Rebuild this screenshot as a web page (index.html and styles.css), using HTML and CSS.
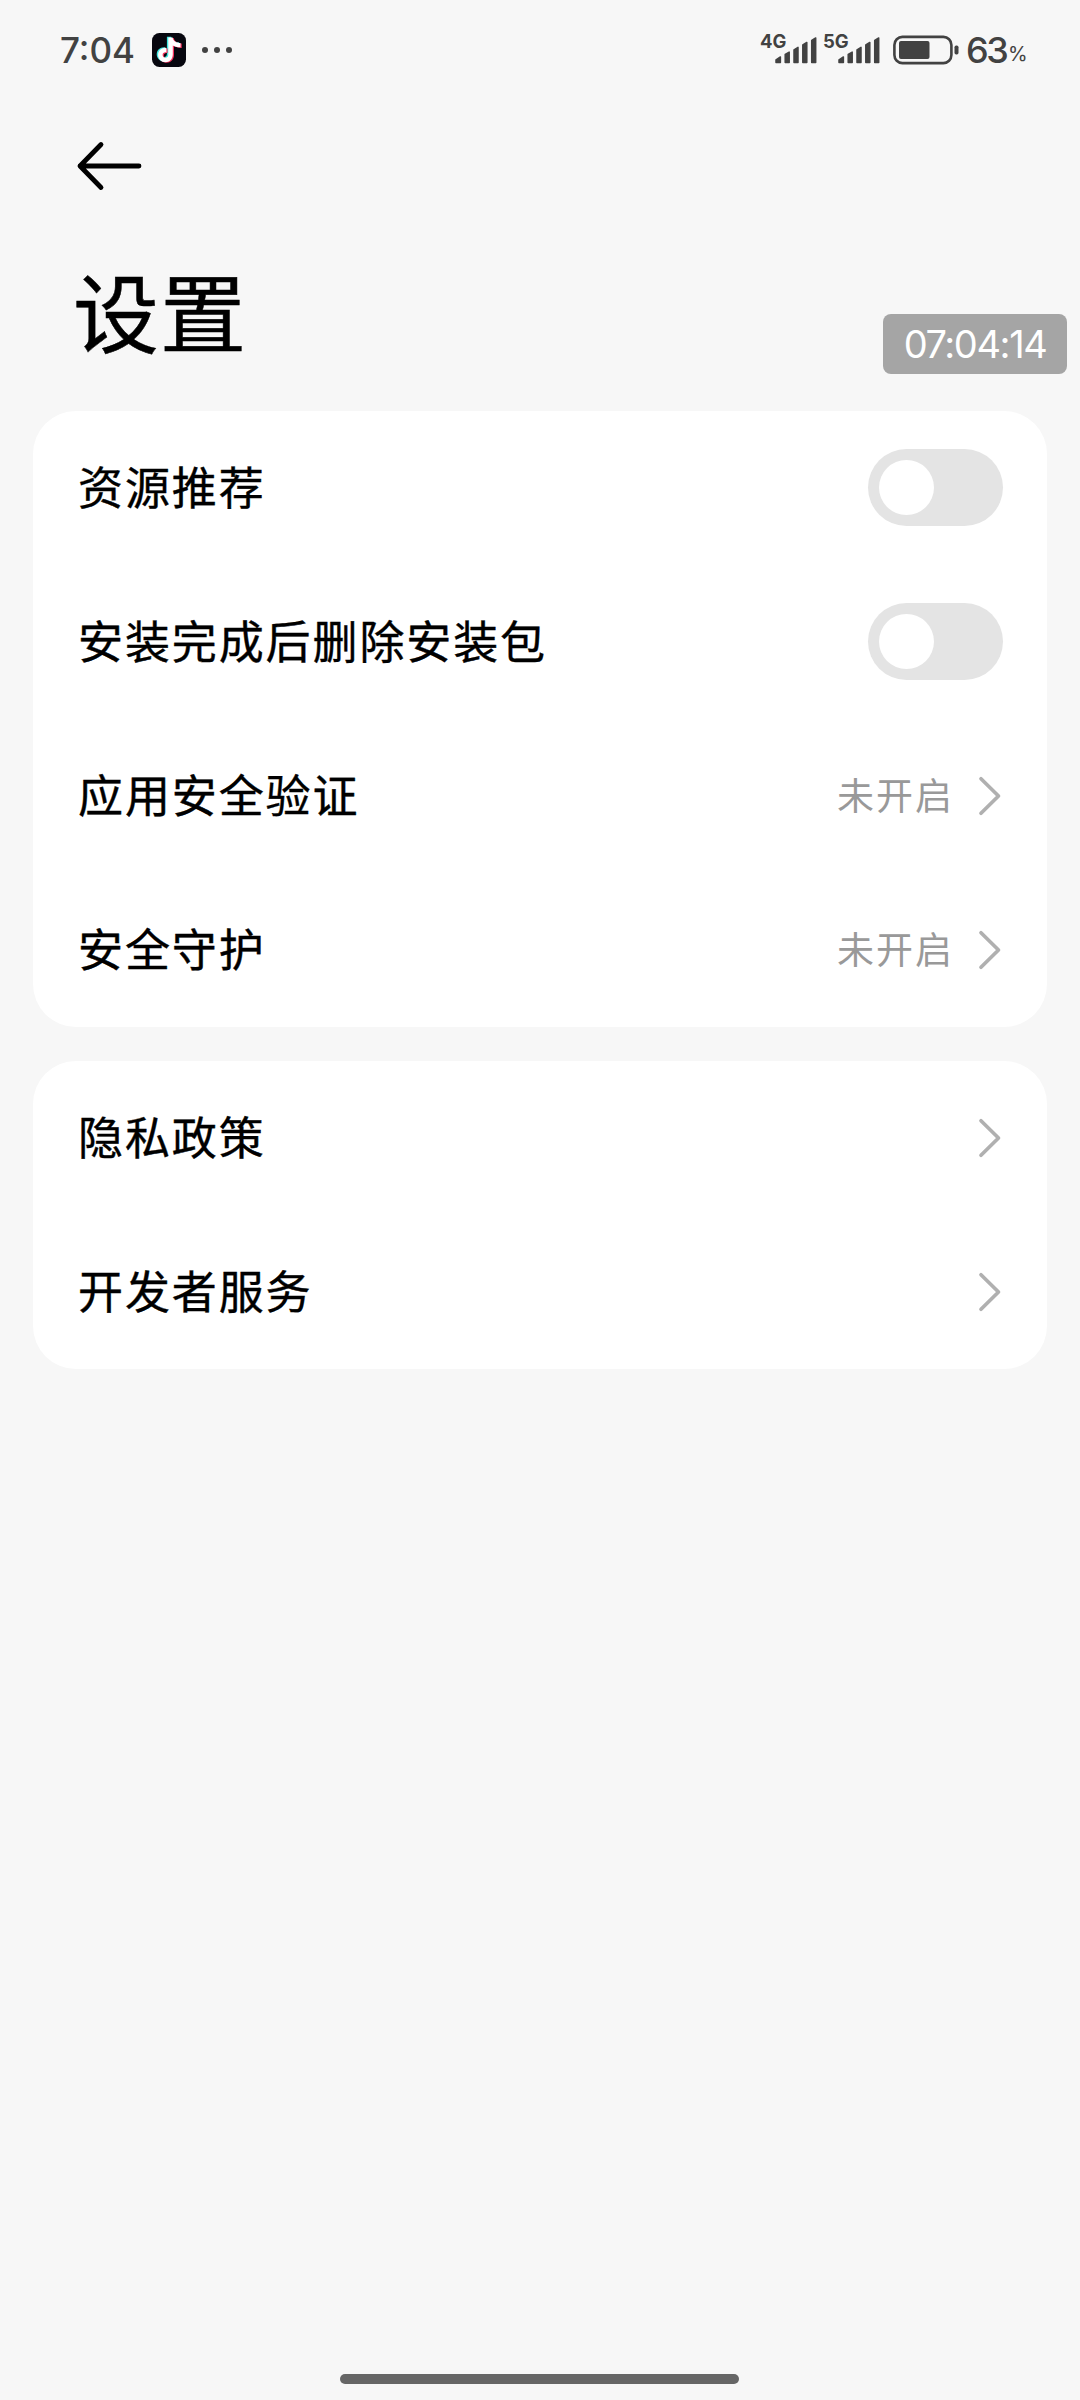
FILE: index.html
```html
<!DOCTYPE html>
<html lang="zh-CN">
<head>
<meta charset="utf-8">
<title>设置</title>
<link rel="stylesheet" href="styles.css">
</head>
<body>
<svg class="defs" aria-hidden="true">
  <defs>
    <symbol id="signal" viewBox="0 0 42 28">
      <path d="M1 25.500v-2.700l4.400-2.800v5.500zM10.200 25.500v-8l4-2.400v10.400zM19 25.500v-12.700l4-2.500v15.200zM27.800 25.500V8l4-2.500v20zM36.700 25.500V3.400l4-2.400v24.500z"/>
    </symbol>
    <symbol id="chevron" viewBox="0 0 24 40">
      <path d="M3 2.800 20.500 20 3 37.200"/>
    </symbol>
    <path id="note" d="M15.400 4.200h4.300c.5 3.400 3.500 5.400 7.900 5.600v4.300c-3 .1-5.800-.6-7.700-1.800v9c0 4.500-3.300 7.700-7.400 7.700-4.200 0-7.300-3.200-7.300-7.200 0-4.400 3.700-7.600 8.300-7.100v4.600c-2.100-.6-3.800.6-3.800 2.500 0 1.600 1.200 2.700 2.700 2.700 1.800 0 3-1.200 3-3.300z"/>
  </defs>
</svg>

<header class="status">
  <div class="status-left">
    <span class="clock">7:04</span>
    <svg class="tiktok" viewBox="0 0 34 34">
      <rect width="34" height="34" rx="7.500" fill="#07070f"/>
      <use href="#note" x="-.5" y="-.5" fill="#3fe6e0"/>
      <use href="#note" x="2.100" y=".8" fill="#f5305c"/>
      <use href="#note" x=".9" y=".2" fill="#fff"/>
    </svg>
    <svg class="dots" viewBox="0 0 30 6"><circle cx="3" cy="3" r="3"/><circle cx="15" cy="3" r="3"/><circle cx="27" cy="3" r="3"/></svg>
  </div>
  <div class="status-right">
    <div class="network"><span class="net-label">4G</span><svg class="bars"><use href="#signal"/></svg></div>
    <div class="network"><span class="net-label">5G</span><svg class="bars"><use href="#signal"/></svg></div>
    <svg class="battery" viewBox="0 0 66 30">
      <rect x="1.400" y="1.900" width="57" height="26.200" rx="8" fill="none" stroke="#424242" stroke-width="2.600"/>
      <rect x="6" y="6" width="30.500" height="18" rx="2"/>
      <rect x="61.500" y="10.500" width="4" height="9" rx="1.700"/>
    </svg>
    <span class="level">63</span><span class="percent">%</span>
  </div>
</header>

<nav class="toolbar">
  <svg class="back" viewBox="0 0 66 50"><path d="M25 3.500 4 25l21 21.500M4 25h59"/></svg>
</nav>
<h1 class="title">设置</h1>

<main class="content">
  <section class="card">
    <div class="row"><span class="label">资源推荐</span><span class="switch"></span></div>
    <div class="row"><span class="label">安装完成后删除安装包</span><span class="switch"></span></div>
    <div class="row"><span class="label">应用安全验证</span><span class="value">未开启</span><svg class="chevron"><use href="#chevron"/></svg></div>
    <div class="row"><span class="label">安全守护</span><span class="value">未开启</span><svg class="chevron"><use href="#chevron"/></svg></div>
  </section>
  <section class="card">
    <div class="row"><span class="label">隐私政策</span><svg class="chevron"><use href="#chevron"/></svg></div>
    <div class="row"><span class="label">开发者服务</span><svg class="chevron"><use href="#chevron"/></svg></div>
  </section>
</main>

<div class="time-overlay">07:04:14</div>
<div class="home-bar"></div>
</body>
</html>
```
FILE: styles.css
```css
* { box-sizing: border-box; }

body {
  position: relative;
  display: flex;
  flex-direction: column;
  margin: 0;
  width: 1080px;
  height: 2400px;
  overflow: hidden;
  background: #f7f7f7;
  color: #000;
  font-family: "Noto Sans CJK SC", sans-serif;
}

svg { display: block; flex: none; }
.defs { position: absolute; width: 0; height: 0; }

/* Status bar */
.status {
  display: flex;
  justify-content: space-between;
  height: 100px;
  padding: 0 54px 0 60px;
  color: #424242;
  fill: #424242;
  font-family: Inter, sans-serif;
}
.status-left, .status-right { display: flex; align-items: center; }
.clock {
  width: 92px;
  font-size: 35px;
  font-weight: 500;
  white-space: nowrap;
}
.tiktok { width: 34px; height: 34px; margin-right: 16px; }
.dots { width: 30px; height: 6px; }
.network { display: flex; width: 63px; height: 32px; }
.net-label {
  width: 15px;
  font-size: 18.500px;
  font-weight: 700;
  line-height: 15px;
  white-space: nowrap;
}
.bars {
  width: 42px;
  height: 28px;
  margin-top: 3px;
  stroke: #424242;
  stroke-width: 1.500;
  stroke-linejoin: round;
}
.battery { width: 66px; height: 30px; margin-left: 7px; }
.level {
  width: 42px;
  margin-left: 7px;
  font-size: 36px;
  font-weight: 500;
  letter-spacing: -2.500px;
  white-space: nowrap;
}
.level + .percent { width: 18px; margin-top: 8px; font-size: 20px; letter-spacing: -1px; }

/* Heading */
.toolbar { height: 132px; padding: 41px 0 0 76px; }
.back {
  width: 66px;
  height: 50px;
  fill: none;
  stroke: #000;
  stroke-width: 4.800;
  stroke-linecap: round;
  stroke-linejoin: round;
}
.title {
  height: 179px;
  margin: 0;
  padding: 18px 0 0 73px;
  font-size: 86px;
  font-weight: 400;
  line-height: 120px;
  letter-spacing: 1px;
  -webkit-text-stroke: .5px #000;
}

/* Settings */
.content { display: flex; flex-direction: column; gap: 34px; padding: 0 33px; }
.card { border-radius: 43px; background: #fff; }
.row { display: flex; align-items: center; height: 154px; padding: 0 45px; }
.label {
  flex: 1;
  padding-bottom: 4px;
  font-size: 45px;
  line-height: 60px;
  letter-spacing: 1.900px;
  -webkit-text-stroke: .4px #000;
}
.value {
  padding-bottom: 4px;
  font-size: 37px;
  line-height: 50px;
  letter-spacing: 2px;
  color: #999;
}
.chevron {
  width: 24px;
  height: 40px;
  margin-left: 24px;
  fill: none;
  stroke: #b0b0b0;
  stroke-width: 3.700;
  stroke-linecap: round;
  stroke-linejoin: round;
}
.switch {
  display: flex;
  width: 135px;
  height: 77px;
  margin: 0 -1px 2px 0;
  padding: 11px;
  border-radius: 39px;
  background: #e4e4e4;
}
.switch::before { content: ""; width: 55px; height: 55px; border-radius: 50%; background: #fff; }

/* Floating layers */
.time-overlay {
  position: absolute;
  top: 314px;
  left: 883px;
  width: 184px;
  height: 60px;
  border-radius: 8px;
  background: #a5a5a5;
  color: #fff;
  font: 400 38px/60px Inter, sans-serif;
  letter-spacing: -1.400px;
  text-align: center;
}
.home-bar {
  position: absolute;
  bottom: 16px;
  left: 340px;
  width: 399px;
  height: 10px;
  border-radius: 5px;
  background: #666;
}
```
